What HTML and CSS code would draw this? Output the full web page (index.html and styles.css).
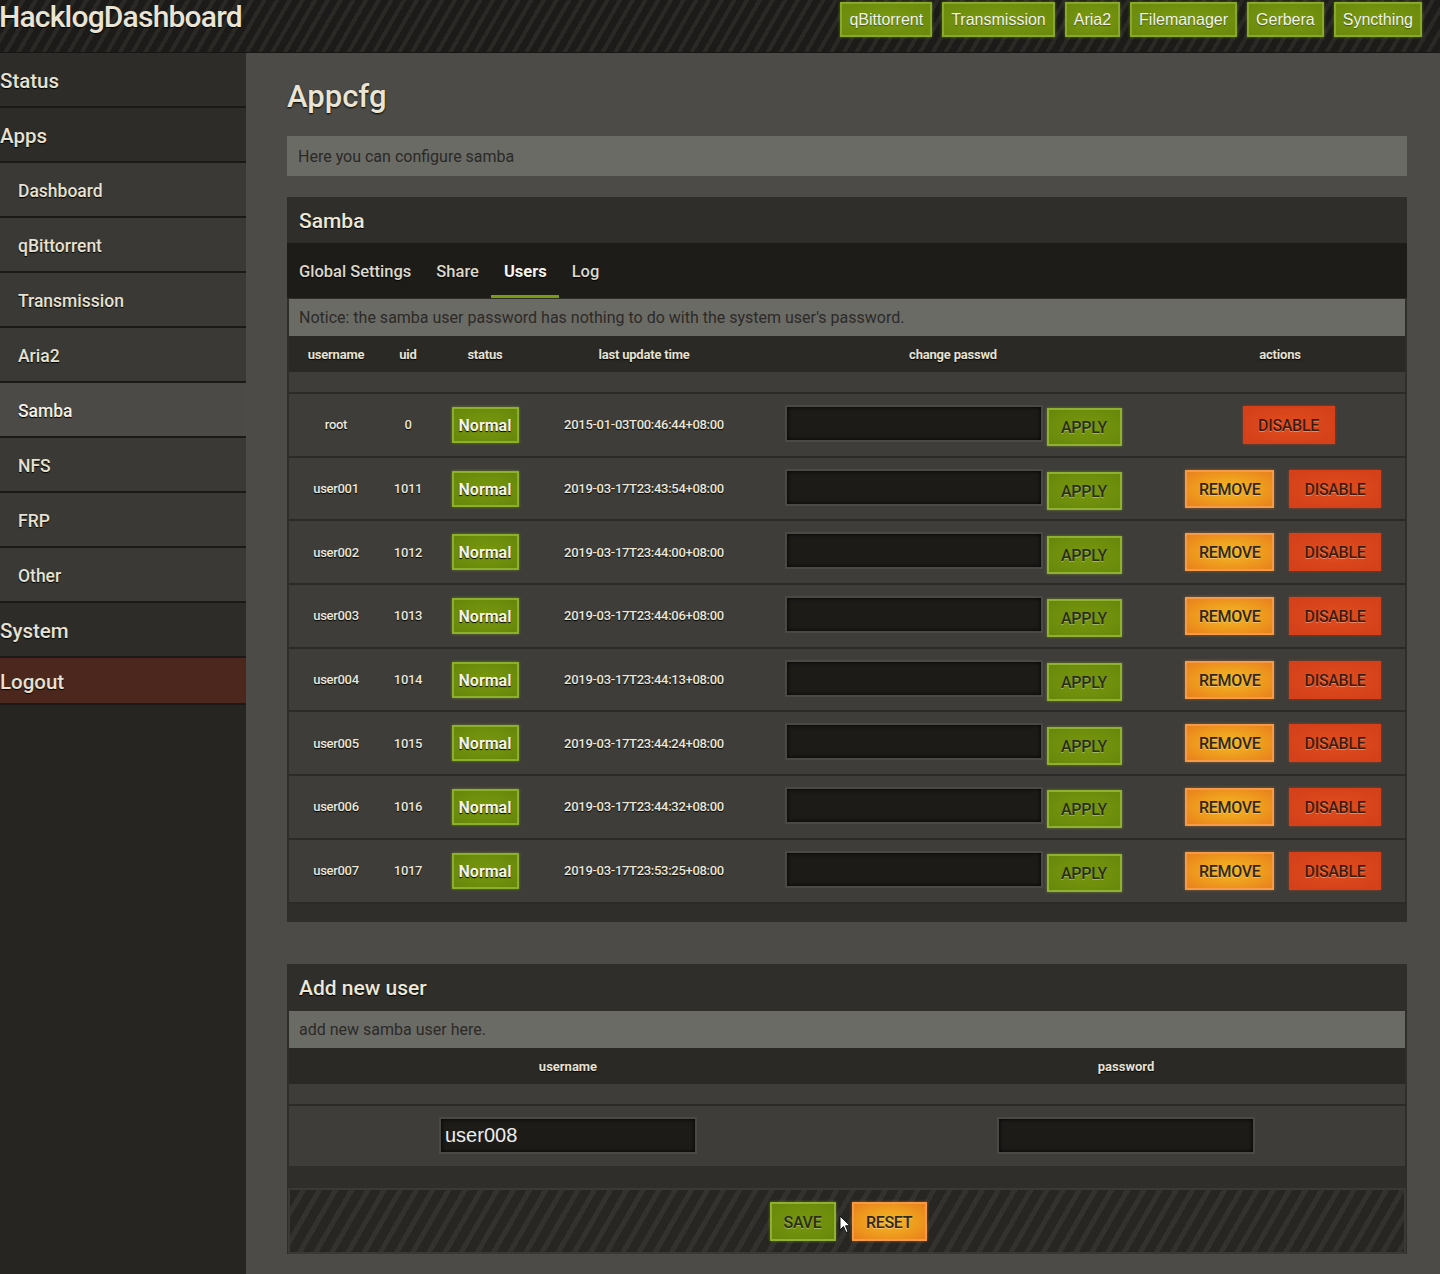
FILE: index.html
```html
<!DOCTYPE html>
<html lang="en">
<head>
<meta charset="utf-8">
<title>HacklogDashboard - Appcfg</title>
<link rel="stylesheet" href="styles.css">
</head>
<body>
<header class="topbar">
  <div class="brand">HacklogDashboard</div>
  <nav class="toplinks">
    <a class="tbtn">qBittorrent</a>
    <a class="tbtn">Transmission</a>
    <a class="tbtn">Aria2</a>
    <a class="tbtn">Filemanager</a>
    <a class="tbtn">Gerbera</a>
    <a class="tbtn">Syncthing</a>
  </nav>
</header>
<div class="layout">
  <aside class="sidebar">
    <a class="nav top">Status</a>
    <a class="nav top">Apps</a>
    <a class="nav sub">Dashboard</a>
    <a class="nav sub">qBittorrent</a>
    <a class="nav sub">Transmission</a>
    <a class="nav sub">Aria2</a>
    <a class="nav sub active">Samba</a>
    <a class="nav sub">NFS</a>
    <a class="nav sub">FRP</a>
    <a class="nav sub">Other</a>
    <a class="nav top">System</a>
    <a class="nav logout">Logout</a>
  </aside>
  <main class="main">
    <h1 class="page-title">Appcfg</h1>
    <div class="intro">Here you can configure samba</div>

    <section class="panel">
      <h2 class="panel-title">Samba</h2>
      <ul class="tabs">
        <li class="tab">Global Settings</li>
        <li class="tab">Share</li>
        <li class="tab active">Users</li>
        <li class="tab">Log</li>
      </ul>
      <div class="notice">Notice: the samba user password has nothing to do with the system user's password.</div>
      <div class="utable">
        <div class="urow uhead">
          <div>username</div><div>uid</div><div>status</div><div>last update time</div><div>change passwd</div><div>actions</div>
        </div>
        <div class="spacer"></div>
        <div class="urow">
          <div>root</div><div>0</div><div><span class="badge">Normal</span></div><div>2015-01-03T00:46:44+08:00</div>
          <div class="pw"><span class="inp"></span><span class="btn green">APPLY</span></div>
          <div class="acts solo"><span class="btn red">DISABLE</span></div>
        </div>
        <div class="urow">
          <div>user001</div><div>1011</div><div><span class="badge">Normal</span></div><div>2019-03-17T23:43:54+08:00</div>
          <div class="pw"><span class="inp"></span><span class="btn green">APPLY</span></div>
          <div class="acts"><span class="btn orange">REMOVE</span><span class="btn red">DISABLE</span></div>
        </div>
        <div class="urow">
          <div>user002</div><div>1012</div><div><span class="badge">Normal</span></div><div>2019-03-17T23:44:00+08:00</div>
          <div class="pw"><span class="inp"></span><span class="btn green">APPLY</span></div>
          <div class="acts"><span class="btn orange">REMOVE</span><span class="btn red">DISABLE</span></div>
        </div>
        <div class="urow">
          <div>user003</div><div>1013</div><div><span class="badge">Normal</span></div><div>2019-03-17T23:44:06+08:00</div>
          <div class="pw"><span class="inp"></span><span class="btn green">APPLY</span></div>
          <div class="acts"><span class="btn orange">REMOVE</span><span class="btn red">DISABLE</span></div>
        </div>
        <div class="urow">
          <div>user004</div><div>1014</div><div><span class="badge">Normal</span></div><div>2019-03-17T23:44:13+08:00</div>
          <div class="pw"><span class="inp"></span><span class="btn green">APPLY</span></div>
          <div class="acts"><span class="btn orange">REMOVE</span><span class="btn red">DISABLE</span></div>
        </div>
        <div class="urow">
          <div>user005</div><div>1015</div><div><span class="badge">Normal</span></div><div>2019-03-17T23:44:24+08:00</div>
          <div class="pw"><span class="inp"></span><span class="btn green">APPLY</span></div>
          <div class="acts"><span class="btn orange">REMOVE</span><span class="btn red">DISABLE</span></div>
        </div>
        <div class="urow">
          <div>user006</div><div>1016</div><div><span class="badge">Normal</span></div><div>2019-03-17T23:44:32+08:00</div>
          <div class="pw"><span class="inp"></span><span class="btn green">APPLY</span></div>
          <div class="acts"><span class="btn orange">REMOVE</span><span class="btn red">DISABLE</span></div>
        </div>
        <div class="urow">
          <div>user007</div><div>1017</div><div><span class="badge">Normal</span></div><div>2019-03-17T23:53:25+08:00</div>
          <div class="pw"><span class="inp"></span><span class="btn green">APPLY</span></div>
          <div class="acts"><span class="btn orange">REMOVE</span><span class="btn red">DISABLE</span></div>
        </div>
      </div>
      <div class="panel-foot"></div>
    </section>

    <section class="panel add">
      <h2 class="panel-title">Add new user</h2>
      <div class="notice">add new samba user here.</div>
      <div class="atable">
        <div class="arow ahead"><div>username</div><div>password</div></div>
        <div class="spacer"></div>
        <div class="arow abody">
          <div><span class="inp wide">user008</span></div>
          <div><span class="inp wide"></span></div>
        </div>
      </div>
      <div class="panel-foot tall"></div>
      <div class="actionbar">
        <div class="abtns">
          <span class="btn green sm">SAVE</span>
          <span class="btn orange sm">RESET</span>
          <svg class="cursor" width="12" height="19" viewBox="0 0 12 19"><path d="M1 1 L1 15 L4.5 11.5 L7 17.5 L9 16.6 L6.6 10.8 L11 10.8 Z" fill="#fff" stroke="#111" stroke-width="1"/></svg>
        </div>
      </div>
    </section>
  </main>
</div>
</body>
</html>
```
FILE: styles.css
```css
* { box-sizing: border-box; }
html, body { margin: 0; padding: 0; }
body {
  background: #4c4b47;
  font-family: Roboto, "Noto Sans", sans-serif;
  color: #e8e3d3;
  width: 1440px;
  min-height: 1274px;
  overflow: hidden;
}

/* top bar */
.topbar {
  height: 53px;
  display: flex;
  justify-content: space-between;
  align-items: flex-start;
  background: repeating-linear-gradient(120deg, #1c1b19 0 7px, #2a2926 7px 11px);
  border-bottom: 1px solid #161614;
}
.brand {
  font-size: 30px;
  line-height: 34px;
  font-weight: 500;
  letter-spacing: -0.8px;
  color: #e9e4d4;
  text-shadow: 0 1px 1px #000;
  margin-left: -1px;
}
.toplinks {
  display: flex;
  gap: 10px;
  margin: 2px 18px 0 0;
}
.tbtn {
  display: block;
  height: 35px;
  line-height: 31px;
  padding: 0 7px;
  font-family: "Liberation Sans", Arial, sans-serif;
  font-size: 16px;
  color: #f2f2ea;
  background: radial-gradient(ellipse at center, #7a9a12 0%, #6a880c 100%);
  border: 2px solid #88a82a;
  box-shadow: 0 0 3px rgba(150, 190, 40, 0.5);
  text-shadow: 0 1px 1px rgba(0,0,0,0.4);
}

/* layout */
.layout {
  display: flex;
  min-height: 1221px;
}
.sidebar {
  width: 246px;
  flex: none;
  background: #262522;
  display: flex;
  flex-direction: column;
}
.nav {
  display: block;
  height: 55px;
  line-height: 53px;
  padding-top: 2px;
  border-bottom: 2px solid #1b1a18;
  color: #e6e1d1;
  text-shadow: 0 1px 1px #000;
  font-weight: 500;
}
.nav.top {
  background: #2d2c28;
  font-size: 20.5px;
  padding-left: 0;
}
.nav.sub {
  background: #3a3935;
  font-size: 17.5px;
  padding-left: 18px;
}
.nav.sub.active {
  background: #4b4a46;
  color: #f4f0e2;
}
.nav.logout {
  background: #4b271e;
  height: 47px;
  line-height: 45px;
  font-size: 20.5px;
}

/* main */
.main {
  flex: 1;
  padding: 22px 33px 19px 41px;
}
.page-title {
  margin: 0 0 21px;
  padding-top: 2px;
  height: 40px;
  font-size: 31px;
  line-height: 40px;
  font-weight: 500;
  color: #e9e4d4;
  text-shadow: 0 1px 2px #000;
}
.intro {
  height: 40px;
  line-height: 41px;
  padding: 0 11px;
  background: #6b6b66;
  color: #2a2926;
  font-size: 16px;
  margin-bottom: 21px;
}

.panel {
  background: #2f2e2a;
  padding: 0 2px;
}
.panel.add { margin-top: 42px; }
.panel-title {
  margin: 0;
  height: 46px;
  line-height: 48px;
  padding-left: 10px;
  font-size: 21px;
  font-weight: 500;
  color: #ece7d7;
  text-shadow: 0 1px 1px #000;
}
.tabs {
  list-style: none;
  margin: 0 -2px;
  padding: 0;
  height: 55px;
  display: flex;
  background: #1d1c19;
}
.tab {
  height: 55px;
  line-height: 58px;
  padding: 0 12.5px;
  font-size: 16.5px;
  font-weight: 500;
  color: #ddd8c8;
  text-shadow: 0 1px 1px #000;
}
.tab:first-child { padding-left: 12px; }
.tab.active {
  color: #f6f3e8;
  font-weight: 700;
  box-shadow: inset 0 -3px 0 #7c9a14;
}
.notice {
  margin-top: 1px;
  height: 37px;
  line-height: 38px;
  padding: 0 10px;
  background: #6b6b66;
  color: #2b2a27;
  font-size: 16px;
}

/* users table */
.urow {
  display: grid;
  grid-template-columns: 94px 50px 104px 214px 404px 1fr;
  align-items: center;
  text-align: center;
}
.uhead {
  height: 36px;
  padding-top: 1px;
  background: #2a2925;
  font-size: 13px;
  font-weight: 700;
  color: #e6e1d2;
  text-shadow: 0 1px 1px #000;
  letter-spacing: -0.2px;
}
.spacer {
  height: 22px;
  background: #3e3d39;
  border-bottom: 2px solid #2b2a27;
}
.urow:not(.uhead) {
  height: 63.7px;
  padding-top: 1px;
  padding-bottom: 1px;
  background: #3e3d39;
  border-bottom: 2px solid #2b2a27;
  font-size: 13px;
  font-weight: 500;
  letter-spacing: -0.3px;
  color: #ebe7da;
  text-shadow: 0 1px 1px #000;
}
.badge {
  display: inline-block;
  width: 67px;
  height: 36px;
  line-height: 33px;
  font-size: 16px;
  font-weight: 700;
  letter-spacing: 0;
  color: #f4f2e4;
  background: radial-gradient(ellipse at center, #789810 0%, #66860b 100%);
  border: 2px solid #8cb02a;
  box-shadow: 0 0 3px rgba(150, 200, 40, 0.45);
}
.pw {
  display: flex;
  justify-content: center;
  align-items: center;
  gap: 4px;
}
.inp {
  display: inline-block;
  width: 258px;
  height: 37px;
  background: #1c1b18;
  border: 2px solid #4a4945;
  box-shadow: inset 0 0 4px #000;
  margin-top: -3px;
}
.btn {
  display: inline-block;
  height: 38px;
  line-height: 36px;
  padding: 0 12px;
  font-size: 16px;
  font-weight: 500;
  letter-spacing: -0.3px;
  text-align: center;
  text-shadow: 0 1px 0 rgba(255,255,255,0.35);
}
.btn.green {
  width: 75px;
  color: #2a2d18;
  background: radial-gradient(ellipse at center, #78980f 0%, #67870b 100%);
  border: 2px solid #8fb030;
  box-shadow: 0 0 3px rgba(150, 200, 40, 0.45);
}
.pw .btn { margin-top: 5px; }
.btn.orange {
  width: 89px;
  color: #33261a;
  background: radial-gradient(ellipse at center, #f3ba22 0%, #ee9b1e 55%, #e9801c 100%);
  border: 2px solid #f59a48;
  box-shadow: 0 0 3px rgba(240, 140, 40, 0.5);
}
.btn.red {
  width: 92px;
  color: #3c1b10;
  background: radial-gradient(ellipse at center, #e24c1d 0%, #d2401a 100%);
  border: 2px solid #d83e18;
  box-shadow: 0 0 3px rgba(220, 70, 20, 0.5);
}
.acts {
  display: flex;
  justify-content: center;
  gap: 15px;
  padding-left: 6px;
}
.acts.solo { padding-left: 17px; }
.panel-foot {
  height: 18px;
  margin: 0 -2px;
  background: #2f2e2a;
}
.panel-foot.tall { height: 22px; }

/* add table */
.arow {
  display: grid;
  grid-template-columns: 1fr 1fr;
  align-items: center;
  text-align: center;
}
.ahead {
  height: 36px;
  padding-top: 1px;
  background: #2a2925;
  font-size: 13px;
  font-weight: 700;
  color: #e6e1d2;
  text-shadow: 0 1px 1px #000;
}
.abody {
  height: 60px;
  background: #3e3d39;
}
.inp.wide {
  margin-top: 0;
  text-align: left;
  font-family: "Liberation Sans", Arial, sans-serif;
  font-size: 20px;
  line-height: 33px;
  padding-left: 4px;
  color: #ececec;
  text-shadow: none;
  vertical-align: middle;
}
.actionbar {
  height: 66px;
  margin: 0 -1px;
  border: 2px solid #3a3935;
  background: repeating-linear-gradient(120deg, #272623 0 9px, #33322e 9px 14px);
  display: flex;
  justify-content: center;
  align-items: center;
}
.abtns {
  position: relative;
  display: flex;
  gap: 16px;
  margin-left: 2px;
  margin-top: 2px;
}
.btn.sm {
  height: 39px;
  line-height: 37px;
  padding: 0;
}
.btn.green.sm { width: 66px; }
.btn.orange.sm { width: 75px; }
.cursor {
  position: absolute;
  left: 69px;
  top: 13px;
}
```
